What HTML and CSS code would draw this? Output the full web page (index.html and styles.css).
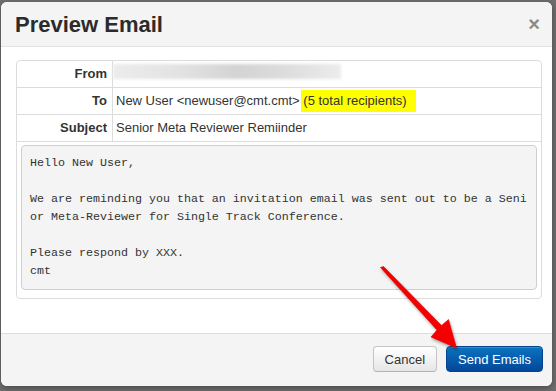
FILE: index.html
```html
<!DOCTYPE html>
<html>
<head>
<meta charset="utf-8">
<link rel="stylesheet" href="styles.css">
</head>
<body>
<div class="modal">
  <div class="modal-header">
    <h3 class="title">Preview Email</h3>
    <span class="close">&times;</span>
  </div>
  <div class="modal-body">
    <table class="meta">
      <tr>
        <th>From</th>
        <td><span class="blurred"></span></td>
      </tr>
      <tr>
        <th>To</th>
        <td>New User &lt;newuser@cmt.cmt&gt; <span class="hl">(5 total recipients)</span></td>
      </tr>
      <tr>
        <th>Subject</th>
        <td>Senior Meta Reviewer Remiinder</td>
      </tr>
      <tr>
        <td class="body-cell" colspan="2"><pre class="mail">Hello New User,

We are reminding you that an invitation email was sent out to be a Seni
or Meta-Reviewer for Single Track Conference.

Please respond by XXX.
cmt</pre></td>
      </tr>
    </table>
  </div>
  <div class="modal-footer">
    <button class="btn">Cancel</button>
    <button class="btn btn-primary">Send Emails</button>
  </div>
  <svg class="arrow" width="556" height="391" viewBox="0 0 556 391">
    <defs>
      <filter id="sh" x="-20%" y="-20%" width="140%" height="140%">
        <feDropShadow dx="1" dy="2" stdDeviation="1.5" flood-color="#000" flood-opacity="0.35"/>
      </filter>
    </defs>
    <path d="M380.5 267.5 L383.5 266.5 L441.5 325.5 L448.5 319.5 L456.5 348 L431 337 L437 330 Z" fill="#f50000" stroke="#d40000" stroke-width="0.6" stroke-linejoin="round" filter="url(#sh)"/>
  </svg>
</div>
</body>
</html>
```
FILE: styles.css
```css
html, body {
  margin: 0;
  padding: 0;
}
body {
  background: #6e6e6e;
  width: 556px;
  height: 391px;
  overflow: hidden;
  padding: 2px 0 0 1px;
  box-sizing: border-box;
  font-family: "Liberation Sans", Arial, sans-serif;
  color: #333;
}
.modal {
  width: 551px;
  height: 384px;
  background: #fff;
  border-radius: 6px;
  box-shadow: 0 2px 6px rgba(0,0,0,0.35);
  display: flex;
  flex-direction: column;
  overflow: hidden;
}
.modal-header {
  background: #f4f4f4;
  border-bottom: 1px solid #e3e3e3;
  height: 44px;
  display: flex;
  align-items: center;
  justify-content: space-between;
  padding: 0 12px 0 14px;
  flex: none;
}
.title {
  margin: 2px 0 0 0;
  font-size: 22px;
  line-height: 26px;
  font-weight: bold;
  color: #2b2b2b;
}
.close {
  font-size: 20px;
  font-weight: bold;
  color: #8a8a8a;
  line-height: 20px;
  margin-top: -1px;
}
.modal-body {
  flex: 1;
  padding: 13px 10px 0 15px;
}
.meta {
  width: 526px;
  border: 1px solid #dcdcdc;
  border-radius: 4px;
  border-collapse: separate;
  border-spacing: 0;
  font-size: 13px;
  table-layout: fixed;
}
.meta th, .meta td {
  border-top: 1px solid #dcdcdc;
  padding: 4px 5px 4px 3px;
  line-height: 18px;
  vertical-align: middle;
  white-space: nowrap;
}
.meta tr:first-child th, .meta tr:first-child td {
  border-top: none;
}
.meta th {
  width: 87px;
  text-align: right;
  font-weight: bold;
  padding-right: 5px;
}
.meta td {
  border-left: 1px solid #dcdcdc;
}
.meta td.body-cell {
  border-left: none;
  padding: 3px 4px 8px 4px;
}
.blurred {
  display: inline-block;
  vertical-align: top;
  margin: -1px 0 0 -3px;
  width: 228px;
  height: 15px;
  background: linear-gradient(90deg, #ececec 0%, #e2e2e2 30%, #d3d3d3 55%, #dcdcdc 75%, #ececec 100%);
  filter: blur(1.5px);
}
.hl {
  background: #ffff00;
  padding: 3px 9px 4px 2px;
  margin-left: -2px;
}
.mail {
  margin: 0;
  background: #f4f4f4;
  border: 1px solid #cfcfcf;
  border-radius: 4px;
  padding: 8px 8px 9px 8px;
  font-family: "Liberation Mono", "Courier New", monospace;
  font-size: 11.67px;
  line-height: 18px;
  color: #333;
  white-space: pre;
  overflow: hidden;
}
.modal-footer {
  flex: none;
  background: #f4f4f4;
  border-top: 1px solid #dedede;
  display: flex;
  justify-content: flex-end;
  align-items: flex-start;
  gap: 9px;
  padding: 12px 9px 0 0;
  box-sizing: border-box;
  height: 53px;
}
.btn {
  height: 26px;
  padding: 0 11px;
  font-family: "Liberation Sans", Arial, sans-serif;
  font-size: 13px;
  color: #333;
  border: 1px solid #c4c4c4;
  border-bottom-color: #b3b3b3;
  border-radius: 4px;
  background: linear-gradient(#ffffff, #e6e6e6);
  box-shadow: inset 0 1px 0 rgba(255,255,255,0.2);
}
.btn-primary {
  color: #fff;
  border-color: #04448f;
  background: linear-gradient(#0a73bf, #03479a);
}
.arrow {
  position: absolute;
  left: 0;
  top: 0;
  pointer-events: none;
}
```
